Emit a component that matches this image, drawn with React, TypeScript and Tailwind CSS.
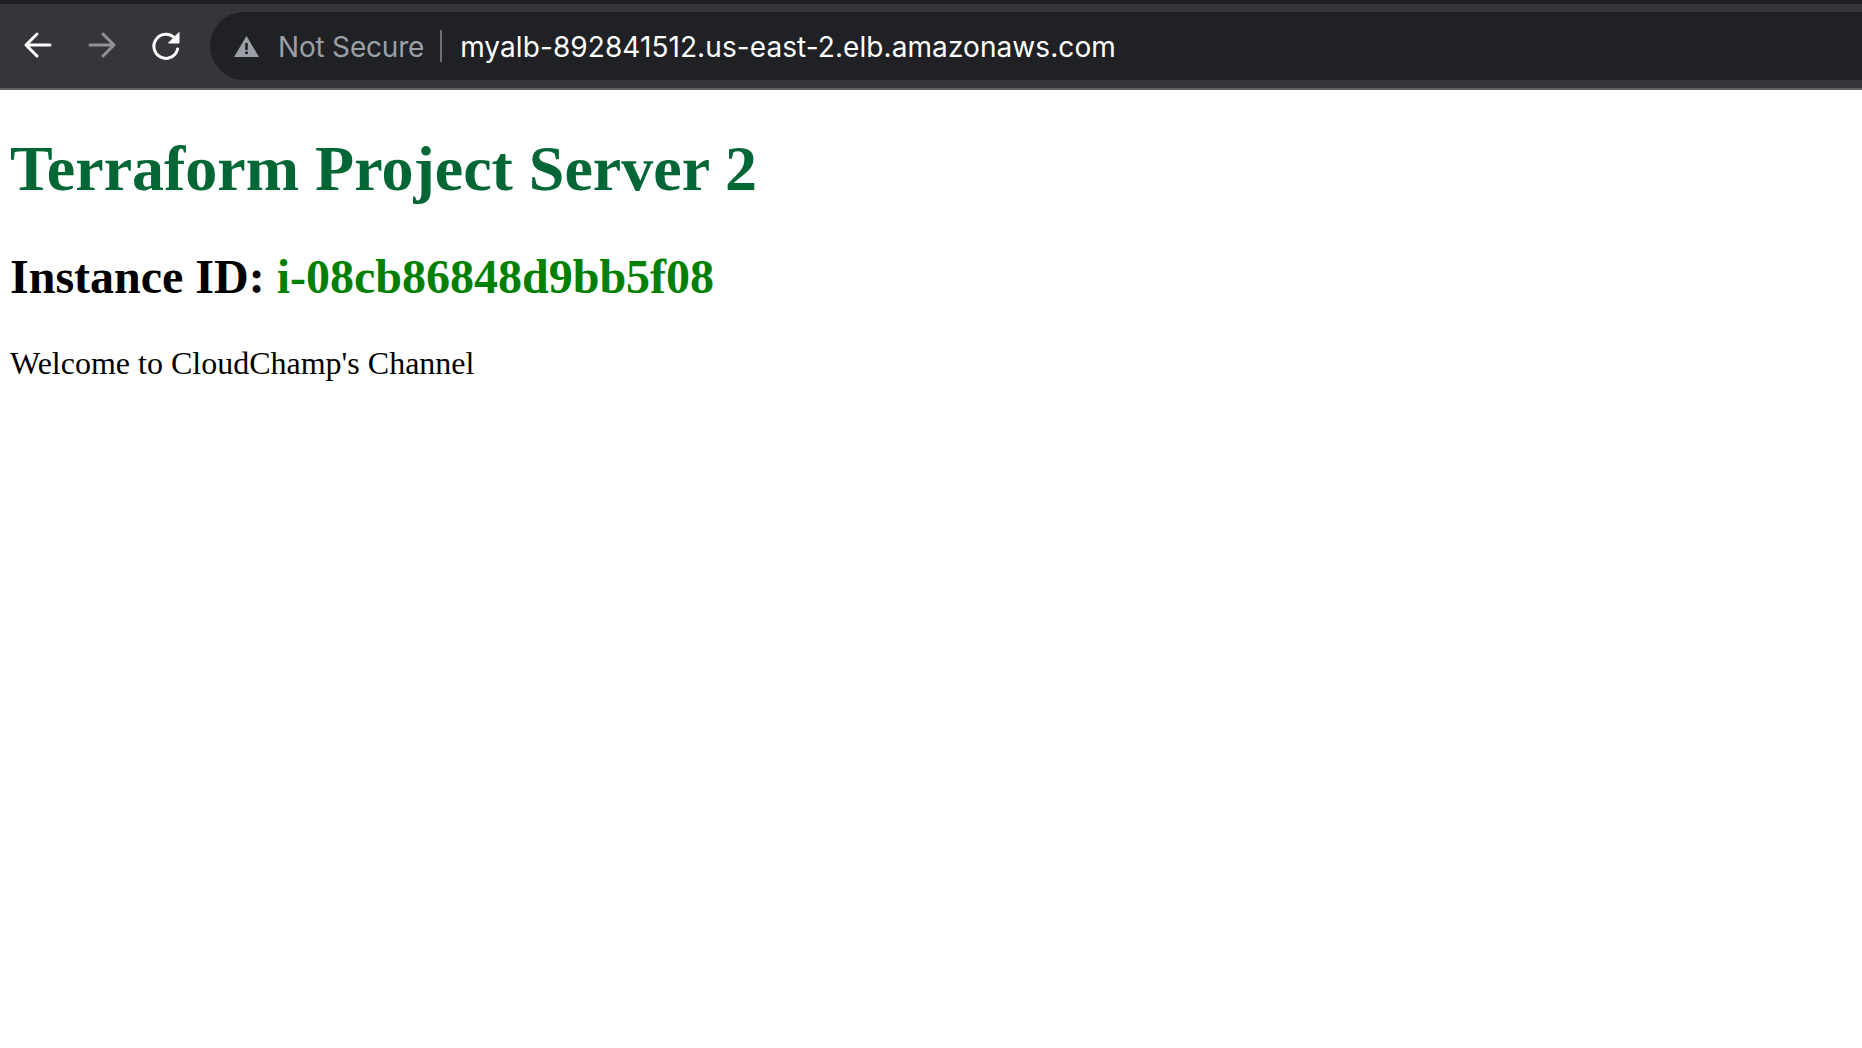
import React from 'react';

function NavArrow({ flip, className }: { flip?: boolean; className: string }) {
  return (
    <svg width="32" height="32" viewBox="0 0 32 32" fill="none" className={className}>
      <path
        d={flip ? 'M4 16H28M17 5L28 16L17 27' : 'M28 16H4M15 5L4 16L15 27'}
        stroke="currentColor"
        strokeWidth="3"
        strokeLinecap="round"
        strokeLinejoin="round"
      />
    </svg>
  );
}

export default function App() {
  return (
    <div className="min-h-[1048px] bg-white font-['Liberation_Serif',serif] text-black">
      <div className="bg-[#202124] pt-1">
        <div className="flex h-[86px] items-center border-b-2 border-[#5f6064] bg-[#35363a] py-2 pl-[22px]">
          <NavArrow className="mb-[2px] text-white" />
          <NavArrow flip className="mb-[2px] ml-[32px] text-[#8f9195]" />
          <svg width="34" height="34" viewBox="0 0 34 34" fill="none" className="ml-[31px] text-white">
            <path d="M26 9.5A12 12 0 1 0 28.6 20" stroke="currentColor" strokeWidth="3" strokeLinecap="round" />
            <path d="M30 3.5V14H19.5Z" fill="currentColor" stroke="currentColor" strokeWidth="1" strokeLinejoin="round" />
          </svg>
          <div className="ml-[27px] flex h-[68px] flex-1 items-center rounded-l-[34px] bg-[#202124] pl-[24px] font-['Inter',sans-serif] text-[28px]">
            <svg width="25" height="21" viewBox="0 0 25 21" className="mr-[19px]">
              <path d="M12.5 0L25 21H0Z" fill="#9aa0a6" />
              <rect x="11.2" y="7" width="2.6" height="7" fill="#202124" />
              <rect x="11.2" y="15.5" width="2.6" height="2.6" fill="#202124" />
            </svg>
            <span className="mt-[1px] tracking-[-0.2px] text-[#9aa0a6]">Not Secure</span>
            <div className="ml-[16px] mr-[18px] h-[32px] w-[2px] bg-[#6f7175]" />
            <span className="mt-[1px] tracking-[0.08px] text-white">myalb-892841512.us-east-2.elb.amazonaws.com</span>
          </div>
        </div>
      </div>
      <div className="px-[10px]">
        <h1 className="mt-[42px] text-[64px] leading-[1.15] font-bold text-[#036635]">Terraform Project Server 2</h1>
        <h2 className="mt-[43px] text-[48px] leading-[1.15] font-bold">
          Instance ID: <span className="text-[#008000]">i-08cb86848d9bb5f08</span>
        </h2>
        <p className="mt-[41px] text-[32px] leading-[1.15]">Welcome to CloudChamp's Channel</p>
      </div>
    </div>
  );
}
